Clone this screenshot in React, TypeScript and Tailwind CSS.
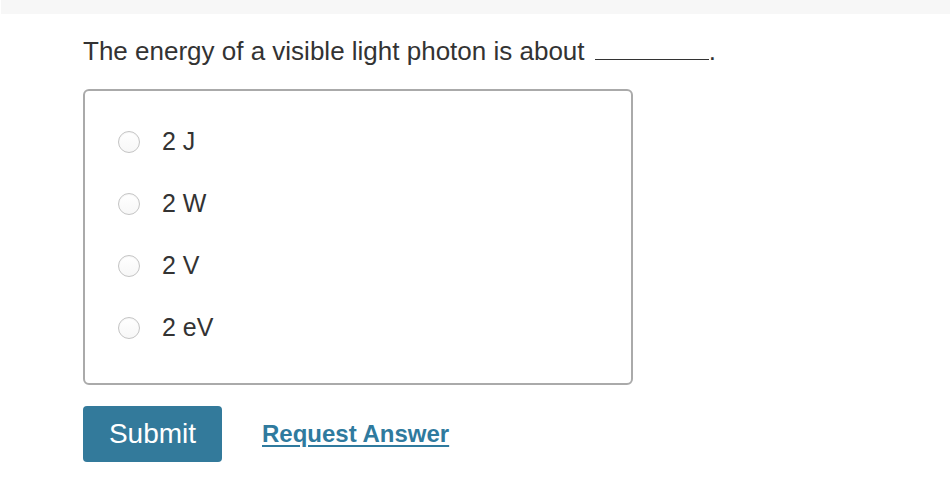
import React from 'react';

const options = ['2 J', '2 W', '2 V', '2 eV'];

export default function App() {
  return (
    <div className="min-h-[498px] w-[950px] bg-white font-['Liberation_Sans',Arial,sans-serif] text-[#333]">
      <div className="ml-px h-[14px] bg-[#f7f7f7]" />
      <div className="pl-[83px] pt-[22px]">
        <p className="text-[26px] leading-[30px]">
          The energy of a visible light photon is about{' '}
          <span className="ml-[3px] inline-block w-[114px] border-b border-[#333] align-baseline" />.
        </p>

        <div className="mt-[23px] flex h-[296px] w-[550px] flex-col gap-[18px] rounded-[6px] border-2 border-[#aaa] pl-[33px] pt-[29px]">
          {options.map((opt) => (
            <label key={opt} className="flex h-[44px] items-center gap-[22px] text-[25px]">
              <span className="h-[22px] w-[22px] rounded-full border border-[#c4c4c4] bg-gradient-to-b from-white to-[#f7f7f7] shadow-[inset_0_1px_1px_rgba(0,0,0,0.04)]" />
              <span>{opt}</span>
            </label>
          ))}
        </div>

        <div className="mt-[21px] flex items-center gap-[40px]">
          <button className="h-[56px] w-[139px] rounded-[4px] bg-[#337a9b] text-[28px] text-white">
            Submit
          </button>
          <a href="#" className="text-[24px] font-bold text-[#2f7a9e] underline underline-offset-[3px]">
            Request Answer
          </a>
        </div>
      </div>
    </div>
  );
}
